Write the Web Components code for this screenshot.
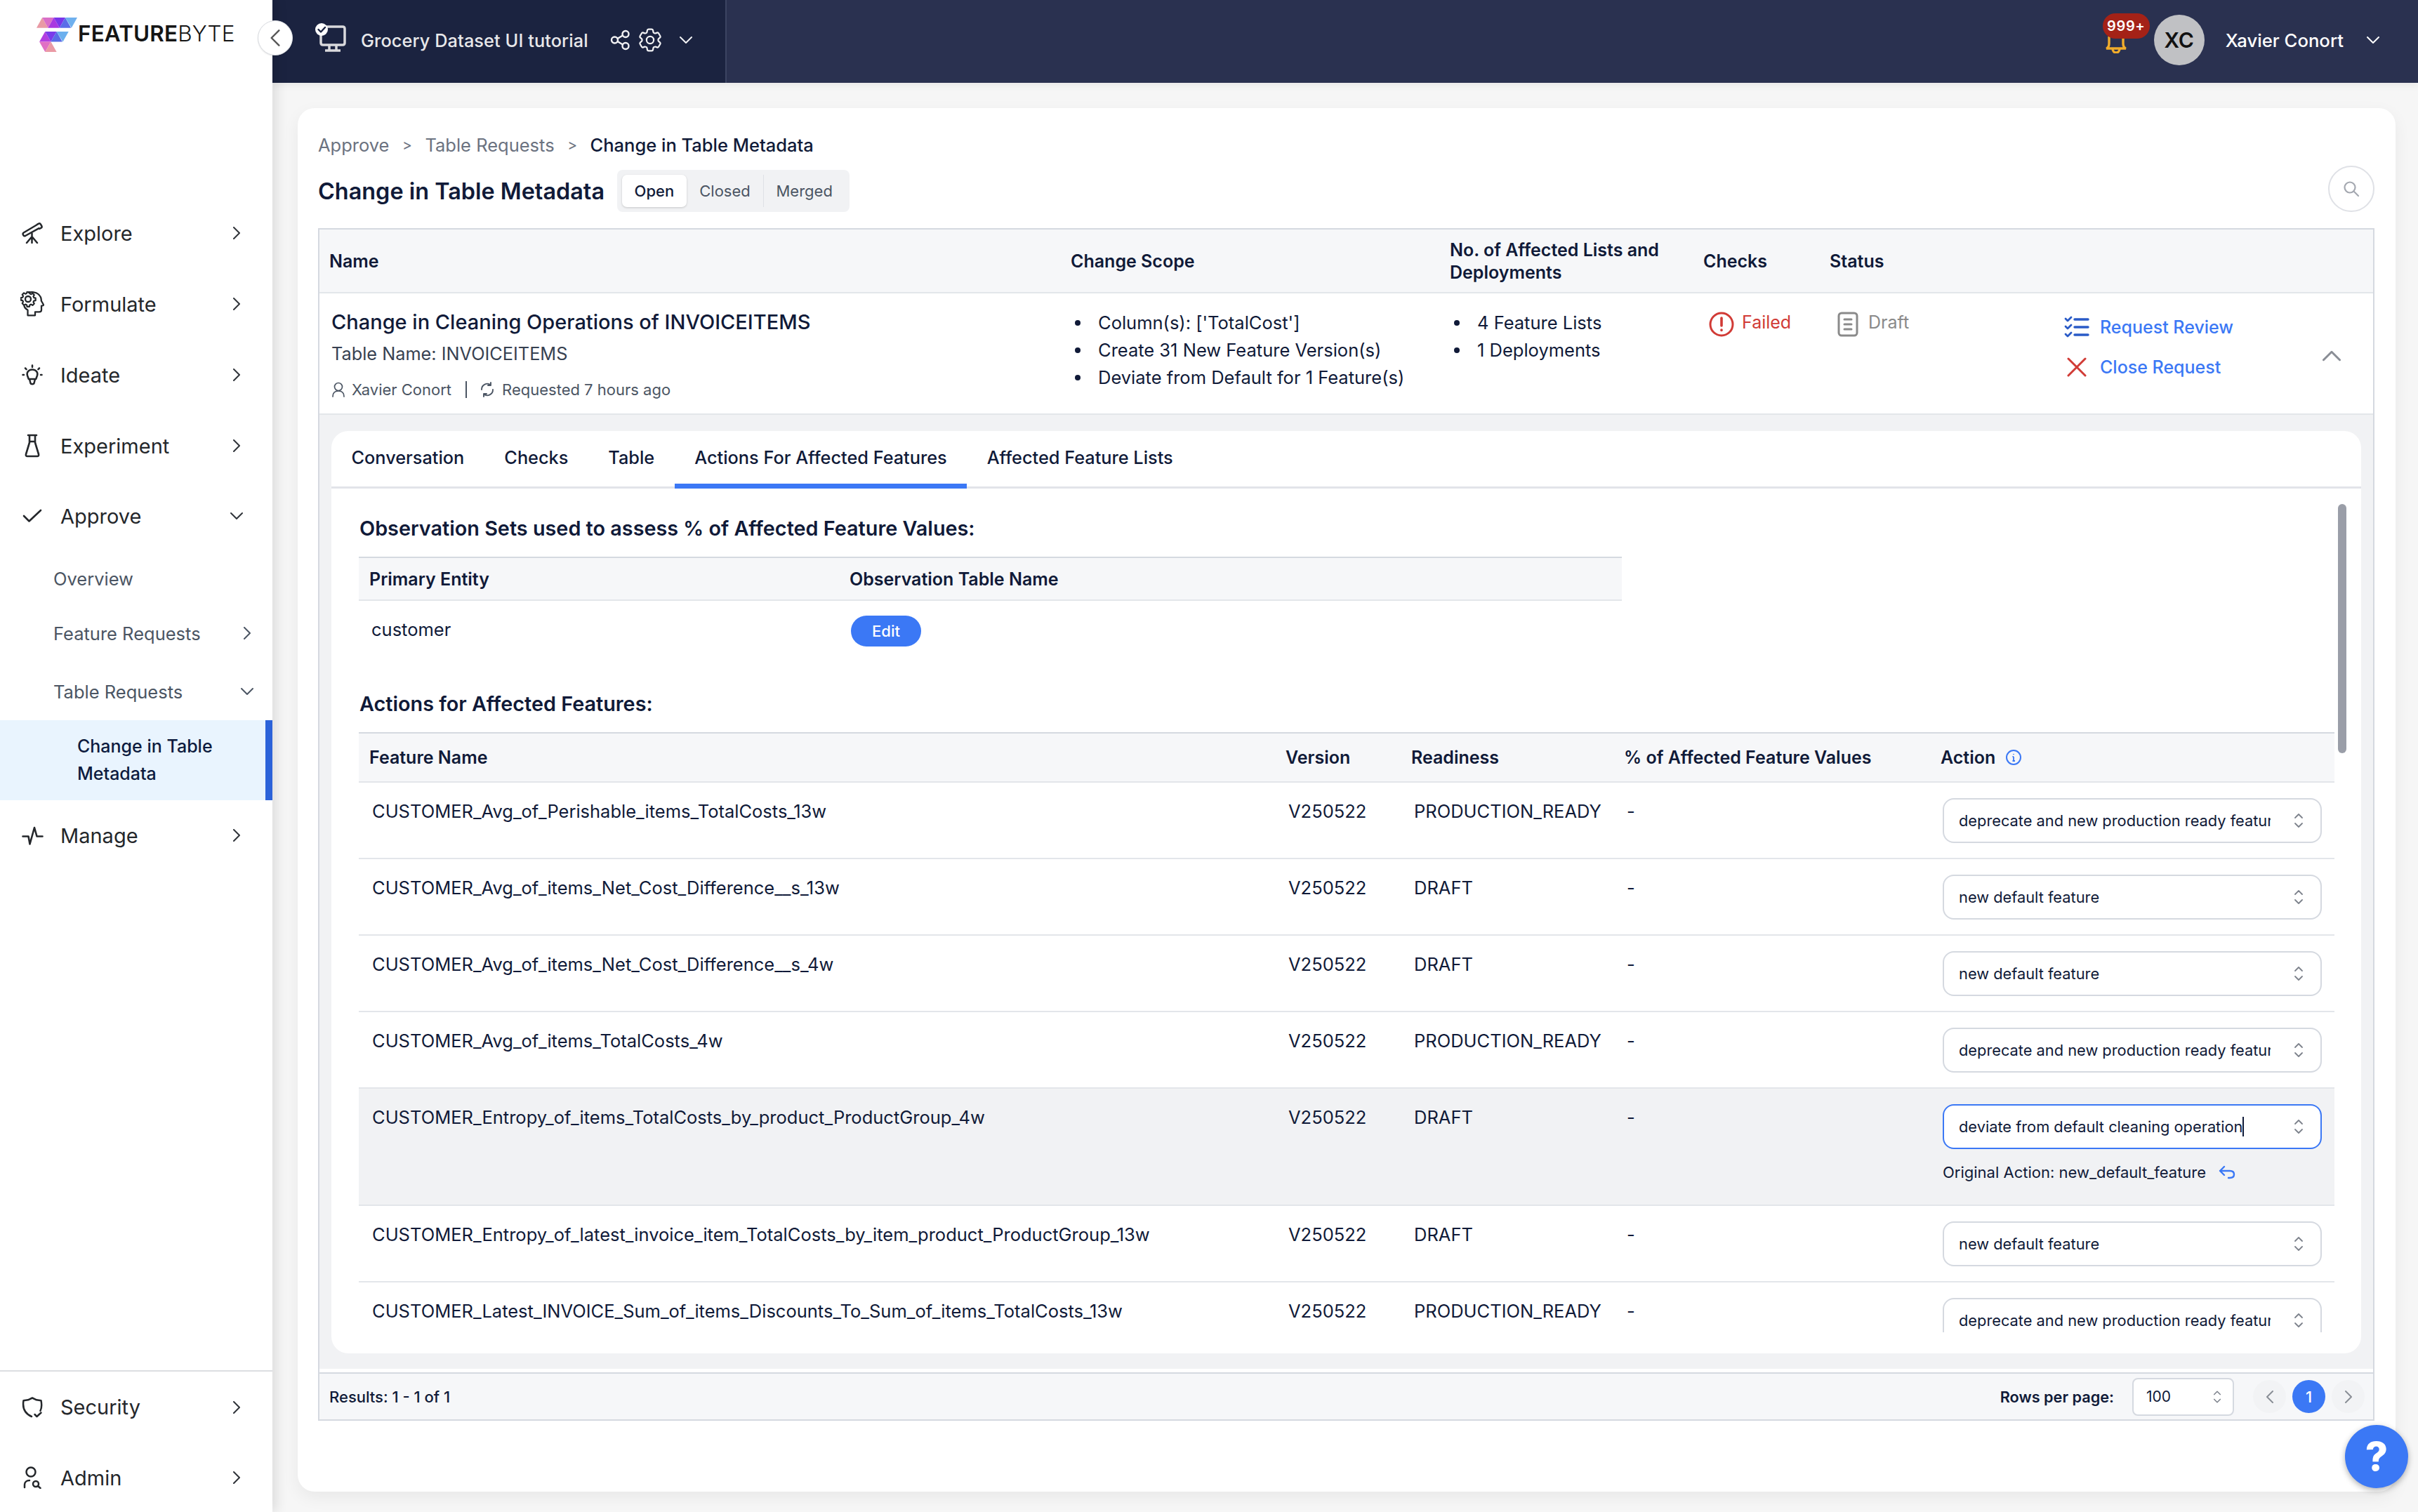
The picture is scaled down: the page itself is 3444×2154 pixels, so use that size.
<!DOCTYPE html>
<html lang="en">
<head>
<meta charset="utf-8">
<title>FeatureByte</title>
<style>
html,body{margin:0;padding:0;background:#f6f6f6;font-family:Inter,"Noto Sans",sans-serif;color:#101a38;-webkit-font-smoothing:antialiased}
body{width:3444px;height:2154px;overflow:hidden}
</style>
</head>
<body>
<fb-app>
  <fb-sidebar slot="side">
    <fb-nav icon="telescope" h="101" slot="top">Explore</fb-nav>
    <fb-nav icon="head" h="101" slot="top">Formulate</fb-nav>
    <fb-nav icon="bulb" h="101" slot="top">Ideate</fb-nav>
    <fb-nav icon="flask" h="101" slot="top">Experiment</fb-nav>
    <fb-nav icon="check" h="99" open slot="top">Approve</fb-nav>
    <fb-subnav h="79" slot="top" plain>Overview</fb-subnav>
    <fb-subnav h="77" slot="top">Feature Requests</fb-subnav>
    <fb-subnav h="85.500" pt="4" open slot="top">Table Requests</fb-subnav>
    <fb-subnav-active slot="top">Change in Table<br>Metadata</fb-subnav-active>
    <fb-nav icon="pulse" h="101" slot="top">Manage</fb-nav>
    <fb-nav icon="shield" h="101" slot="bottom">Security</fb-nav>
    <fb-nav icon="admin" h="100" slot="bottom">Admin</fb-nav>
  </fb-sidebar>
  <fb-topbar slot="top"></fb-topbar>
  <fb-page slot="main">
    <fb-breadcrumb slot="crumb"></fb-breadcrumb>
    <fb-title-row slot="title"></fb-title-row>
    <fb-request-table slot="table">
      <fb-tabs slot="tabs"></fb-tabs>
      <fb-panel slot="panel">
        <fb-observation></fb-observation>
        <fb-feature-table>
          <fb-feature-row name="CUSTOMER_Avg_of_Perishable_items_TotalCosts_13w" ready="PRODUCTION_READY" action="deprecate and new production ready feature"></fb-feature-row>
          <fb-feature-row name="CUSTOMER_Avg_of_items_Net_Cost_Difference__s_13w" ready="DRAFT" action="new default feature"></fb-feature-row>
          <fb-feature-row name="CUSTOMER_Avg_of_items_Net_Cost_Difference__s_4w" ready="DRAFT" action="new default feature"></fb-feature-row>
          <fb-feature-row name="CUSTOMER_Avg_of_items_TotalCosts_4w" ready="PRODUCTION_READY" action="deprecate and new production ready feature"></fb-feature-row>
          <fb-feature-row name="CUSTOMER_Entropy_of_items_TotalCosts_by_product_ProductGroup_4w" ready="DRAFT" action="deviate from default cleaning operation" focused original="new_default_feature"></fb-feature-row>
          <fb-feature-row name="CUSTOMER_Entropy_of_latest_invoice_item_TotalCosts_by_item_product_ProductGroup_13w" ready="DRAFT" action="new default feature"></fb-feature-row>
          <fb-feature-row name="CUSTOMER_Latest_INVOICE_Sum_of_items_Discounts_To_Sum_of_items_TotalCosts_13w" ready="PRODUCTION_READY" action="deprecate and new production ready feature"></fb-feature-row>
        </fb-feature-table>
      </fb-panel>
      <fb-table-footer slot="footer"></fb-table-footer>
    </fb-request-table>
  </fb-page>
  <fb-help slot="help"></fb-help>
</fb-app>
<script>
const S='fill="none" stroke="currentColor" stroke-linecap="round" stroke-linejoin="round"';
const ICON={
 telescope:`<svg width="30" height="30" viewBox="0 0 30 30" ${S} stroke-width="2.500"><path d="M2.600 14.500 21.500 3.200M5 19 24.600 8.200M2.600 14.500c-1.200.8-1.200 1.800-.7 2.900.6 1.300 1.700 2.200 3.100 1.600M21.800 2.900l2.300-1.300c1.200-.6 2.200-.2 2.900 1l1.300 2.300c.6 1.200.4 2.100-.7 2.800l-2.400 1.300"/><path d="M14.500 15.500V29M14.500 20 7 29M14.500 20 22 29"/></svg>`,
 head:`<svg width="34" height="36" viewBox="0 0 34 36" ${S} stroke-width="2.300"><path d="M12 1.800c4-1.300 10-.8 13.500 2.200 3.500 3 4.500 6.500 4.300 9.500l3 5.300c.5 1-.2 1.700-2.800 1.900v5.800c0 1.800-1.200 2.800-3 2.800H21v5H10.500v-7.500C7.500 25 6 23.500 5.500 21"/><circle cx="11" cy="11" r="4"/><path d="M9.200 1.800h3.600l.5 2.500 2 .9 2.200-1.400 2.500 2.500-1.400 2.200.9 2 2.500.5v3.600l-2.500.5-.9 2 1.400 2.200-2.500 2.500-2.200-1.400-2 .9-.5 2.500H9.200l-.5-2.500-2-.9-2.200 1.400L2 18.800l1.400-2.200-.9-2L0 14.100v-3.600l2.500-.5.9-2L2 5.800l2.500-2.500 2.200 1.400 2-.9z" transform="translate(.8 -.8) scale(.95)"/></svg>`,
 bulb:`<svg width="30" height="30" viewBox="0 0 30 30" ${S} stroke-width="2.500"><path d="M15 1.500v2.500M5 5.500l1.600 1.600M25 5.500l-1.600 1.600M1.500 15h1.500M27 15h1.500"/><path d="M9.800 21 8 16c-1.500-4.500 2-8.500 7-8.500s8.500 4 7 8.500l-1.800 5zM11 21l1.500 6c.5 1.500 4.500 1.500 5 0l1.500-6"/></svg>`,
 flask:`<svg width="22" height="34" viewBox="0 0 22 34" ${S} stroke-width="2.600"><path d="M5 2h12M7 2v10.500L2 29c-.5 1.800.3 3 2 3h14c1.700 0 2.500-1.200 2-3l-5-16.500V2M7 11h8"/></svg>`,
 check:`<svg width="28" height="20" viewBox="0 0 28 20" ${S} stroke-width="2.600"><path d="M2 10l7.500 7.500L26 2"/></svg>`,
 pulse:`<svg width="31" height="27" viewBox="0 0 31 27" ${S} stroke-width="2.600"><path d="M1.500 14.500H9.500L11.500 25.500 18 2 21.500 14.500H29.500"/></svg>`,
 shield:`<svg width="30" height="30" viewBox="0 0 30 30" ${S} stroke-width="2.500"><path d="M15 1.500 21 4.300l6.500 1c1 5 1 10.500-1 14.500M15 1.500 9 4.300l-6.500 1C1 14 3 23 14 28"/><path d="M18.500 25l3 3 6-5.500"/></svg>`,
 admin:`<svg width="30" height="32" viewBox="0 0 30 32" ${S} stroke-width="2.500"><circle cx="13" cy="8" r="6.500"/><path d="M4 30v-4c0-3.500 3-6 7-6"/><circle cx="20" cy="25" r="4"/><path d="M23 28l3.500 3"/></svg>`
};
const chev=(d,sz=16,sw=2)=>{const p={r:'M5 1l8 8-8 8',l:'M13 1 5 9l8 8',d:'M1 5l8 8 8-8',u:'M1 13l8-8 8 8'}[d];return `<svg width="${sz}" height="${sz}" viewBox="0 0 18 18" ${S} stroke-width="${sw*18/sz}"><path d="${p}"/></svg>`};
const updown=(w=14,h=22)=>`<svg width="${w}" height="${h}" viewBox="0 0 14 22" ${S} stroke-width="1.800"><path d="M2 7l5-5 5 5M2 15l5 5 5-5"/></svg>`;
function def(name,css,html){customElements.define(name,class extends HTMLElement{constructor(){super();this.attachShadow({mode:'open'})}
 connectedCallback(){this.shadowRoot.innerHTML=`<style>${css}</style>`+(typeof html==='function'?html(this):html)}})}

def('fb-app',`:host{display:grid;grid-template-columns:388px 1fr;grid-template-rows:118px 1fr;width:3444px;height:2154px;position:relative}
 .s{grid-row:1/3;z-index:2;display:block;height:2154px}.t{grid-column:2}.m{grid-column:2;min-height:0}`,
 `<div class="s"><slot name="side"></slot></div><div class="t"><slot name="top"></slot></div><div class="m"><slot name="main"></slot></div><slot name="help"></slot>`);

def('fb-sidebar',`:host{display:flex;flex-direction:column;height:2154px;background:#fff;box-shadow:6px 0 16px rgba(0,0,0,.10);position:relative}
 .logo{height:281.500px;box-sizing:border-box;padding:25px 0 0 52px;display:flex;align-items:flex-start;flex:none}
 .word{font-size:31.400px;line-height:46px;color:#151515;font-weight:600;margin-left:1px;letter-spacing:.2px}
 .word span{font-weight:300}
 .sp{flex:1}.bt{border-top:2px solid #dcdee2;height:200px}
 .col{position:absolute;left:367px;top:29px;width:48px;height:48px;border:1px solid #d8dbe0;border-radius:50%;background:#fff;display:flex;align-items:center;justify-content:center;color:#555;box-shadow:0 1px 2px rgba(0,0,0,.1);z-index:3}`,
 `<div class="logo"><svg width="58" height="49" viewBox="38 45 170 143" shape-rendering="geometricPrecision">
   <path fill="#e99aa5" d="M38 88 62 45 86 88z"/><path fill="#d96ec8" d="M62 45h48L86 88z"/><path fill="#a937e0" d="M86 88l24-43 24 43z"/><path fill="#7a35ea" d="M110 45h48l-24 43z"/><path fill="#5b6de8" d="M134 88l24-43 24 43z"/><path fill="#6fb0ee" d="M158 45h50l-24 43z"/>
   <path fill="#b23fe0" d="M50 146l24-43 24 43z"/><path fill="#7a3cea" d="M74 103h48l-24 43z"/><path fill="#5a6de6" d="M98 146l24-43 24 43z"/><path fill="#6cb0ee" d="M122 103h50l-24 43z"/>
   <path fill="#e070c4" d="M50 146h48l-24 42z"/><path fill="#ea9aa5" d="M74 188l24-42 24 42z"/></svg>
   <div class="word">FEATURE<span>BYTE</span></div></div>
  <slot name="top"></slot><div class="sp"></div><div class="bt"><slot name="bottom"></slot></div>
  <div class="col">${chev('l',24,2.4)}</div>`);

def('fb-nav',`:host{display:flex;align-items:center;box-sizing:border-box;font-size:29px;color:#24272b;padding-right:42px;position:relative}
 .i{width:86px;box-sizing:border-box;display:flex;justify-content:center;padding-left:6px;flex:none}
 .t{flex:1}.c{display:flex;color:#30343a}`,
 h=>{h.style.height=h.getAttribute('h')+'px';return `<div class="i">${ICON[h.getAttribute('icon')]}</div><div class="t"><slot></slot></div><div class="c">${chev(h.hasAttribute('open')?'d':'r',18,2)}</div>`});

def('fb-subnav',`:host{display:flex;align-items:center;box-sizing:border-box;font-size:25.500px;color:#4b5563;padding-left:76px;padding-right:27px}
 .t{flex:1}.c{display:flex;color:#4b5563}`,
 h=>{h.style.height=h.getAttribute('h')+'px';if(h.getAttribute('pt'))h.style.paddingTop=h.getAttribute('pt')+'px';
  return `<div class="t"><slot></slot></div>${h.hasAttribute('plain')?'':`<div class="c">${chev(h.hasAttribute('open')?'d':'r',18,2)}</div>`}`});

def('fb-subnav-active',`:host{display:block;box-sizing:border-box;height:113.500px;background:#e9f4fe;border-right:10px solid #2b62d9;padding:18px 0 0 110px;font-size:25px;line-height:39px;color:#0d1b3e;font-weight:500}`,`<slot></slot>`);

def('fb-topbar',`:host{display:flex;height:118px;background:#2a3150;color:#fff;box-shadow:0 4px 10px rgba(0,0,0,.06);position:relative}
 .l{width:647px;box-sizing:border-box;background:#1b2340;border-right:2px solid #3c4462;display:flex;align-items:center;padding:0 0 4px 60px;flex:none;color:#e8e8ea}
 .mon{width:50px;height:56px;flex:none;margin-top:6px}
 .name{font-size:25.300px;font-weight:500;margin-left:16px;white-space:nowrap;letter-spacing:.1px}
 .ic{display:flex;align-items:center;margin-left:31px;gap:11px;color:#f2f2f4}
 .r{flex:1;display:flex;align-items:center;justify-content:flex-end;padding:0 55px 4px 0}
 .bell{position:relative;width:70px;height:72px;margin-right:3px}
 .bell svg{position:absolute;left:3px;top:31px}
 .badge{position:absolute;left:0;top:-2px;width:67px;height:36px;border-radius:18px;background:#a42217;color:#fff;font-size:20px;font-weight:600;line-height:36px;text-align:center;letter-spacing:.6px}
 .av{width:72px;height:72px;border-radius:50%;background:#c0c1c4;color:#111;font-size:30px;font-weight:600;display:flex;align-items:center;justify-content:center;margin-right:30px}
 .u{font-size:25.700px;font-weight:500;margin-right:33px;white-space:nowrap}`,
 `<div class="l"><svg class="mon" viewBox="0 0 50 56" fill="none">
    <path d="M16 6h24c2 0 3 1 3 3v20c0 2-1 3-3 3H12c-2 0-3-1-3-3V18" stroke="#d9d9dc" stroke-width="3.500" stroke-linecap="round"/>
    <path d="M21 32v7M31 32v7M15 40h22" stroke="#d9d9dc" stroke-width="3.500"/>
    <circle cx="10" cy="10" r="9" fill="#fff"/><path d="M5.500 10l3.500 3.500 6-6.500" stroke="#1b2340" stroke-width="2.400" stroke-linecap="round" stroke-linejoin="round"/></svg>
   <div class="name">Grocery Dataset UI tutorial</div>
   <div class="ic"><svg width="29" height="30" viewBox="0 0 29 30" ${S} stroke-width="2.400"><circle cx="6.500" cy="15" r="4.500"/><circle cx="22" cy="6.500" r="4.500"/><circle cx="22" cy="23.500" r="4.500"/><path d="M10.500 13 18 8.500M10.500 17l7.500 4.500"/></svg>
    <svg width="34" height="36" viewBox="2 2 20 20" ${S} stroke-width="1.300"><path d="M9.594 3.940c.09-.542.56-.94 1.110-.94h2.593c.55 0 1.020.398 1.110.94l.213 1.281c.063.374.313.686.645.870.074.04.147.083.22.127.325.196.72.257 1.075.124l1.217-.456a1.125 1.125 0 0 1 1.370.49l1.296 2.247a1.125 1.125 0 0 1-.26 1.431l-1.003.827c-.293.241-.438.613-.43.992a7.723 7.723 0 0 1 0 .255c-.008.378.137.75.43.991l1.004.827c.424.35.534.955.26 1.430l-1.298 2.247a1.125 1.125 0 0 1-1.369.491l-1.217-.456c-.355-.133-.75-.072-1.076.124a6.470 6.470 0 0 1-.22.128c-.331.183-.581.495-.644.869l-.213 1.281c-.09.543-.56.94-1.110.94h-2.594c-.55 0-1.019-.398-1.110-.94l-.213-1.281c-.062-.374-.312-.686-.644-.87a6.520 6.520 0 0 1-.22-.127c-.325-.196-.72-.257-1.076-.124l-1.217.456a1.125 1.125 0 0 1-1.369-.49l-1.297-2.247a1.125 1.125 0 0 1 .26-1.431l1.004-.827c.292-.24.437-.613.43-.991a6.932 6.932 0 0 1 0-.255c.007-.38-.138-.751-.43-.992l-1.004-.827a1.125 1.125 0 0 1-.26-1.430l1.297-2.247a1.125 1.125 0 0 1 1.370-.491l1.216.456c.356.133.751.072 1.076-.124.072-.044.146-.086.22-.128.332-.183.582-.495.644-.869l.214-1.280Z"/><circle cx="12" cy="12" r="3"/></svg>
    <span style="display:flex;margin-left:14px">${chev('d',18,2)}</span></div></div>
  <div class="r"><div class="bell"><svg width="32" height="24" viewBox="0 0 32 24" fill="none" stroke="#f0ac2b" stroke-width="3.400" stroke-linecap="round"><path d="M6 0v10c0 4-1 6-4 7h28c-3-1-4-3-4-7V0M11 17c0 8 10 8 10 0"/></svg><div class="badge">999+</div></div>
   <div class="av">XC</div><div class="u">Xavier Conort</div><span style="display:flex">${chev('d',18,2)}</span></div>`);

def('fb-page',`:host{display:block;box-sizing:border-box;padding:36px 32px 0 36px;height:2036px}
 .card{background:#fff;border-radius:24px;height:1971px;box-sizing:border-box;padding:26px 30px 0 29px;box-shadow:0 8px 24px rgba(0,0,0,.06);display:flex;flex-direction:column}`,
 `<div class="card"><slot name="crumb"></slot><slot name="title"></slot><slot name="table"></slot></div>`);

def('fb-breadcrumb',`:host{display:flex;align-items:center;height:52px;font-size:25.500px;color:#6b7280;white-space:nowrap;margin-bottom:10px}
 .s{margin:0 18.500px;font-size:21px;color:#6b7280}b{font-weight:500;color:#101a38}`,
 `<span>Approve</span><span class="s">&gt;</span><span>Table Requests</span><span class="s">&gt;</span><b>Change in Table Metadata</b>`);

def('fb-title-row',`:host{display:flex;align-items:center;height:60px;margin-bottom:23px;color:#101a38}
 h1{margin:0;font-size:32.400px;font-weight:600;white-space:nowrap;width:426px;flex:none}
 .seg{display:flex;width:331px;height:60px;box-sizing:border-box;background:#f1f2f4;border-radius:8px;padding:7px;font-size:22px;color:#4b5563;align-items:stretch}
 .seg span{display:flex;align-items:center;justify-content:center}
 .on{width:92px;background:#fff;border-radius:7px;box-shadow:0 1px 3px rgba(0,0,0,.18);color:#101a38;font-weight:500}
 .b{width:110px;border-right:1px solid #dfe1e6}.c{width:115px}
 .sr{margin-left:auto;width:66px;height:66px;box-sizing:border-box;border:2px solid #dfe1e6;border-radius:50%;display:flex;align-items:center;justify-content:center;color:#a4a8b0;margin-top:-6px}`,
 `<h1>Change in Table Metadata</h1><div class="seg"><span class="on">Open</span><span class="b">Closed</span><span class="c">Merged</span></div>
  <div class="sr"><svg width="24" height="24" viewBox="0 0 24 24" ${S} stroke-width="2.200"><circle cx="10" cy="10" r="7.500"/><path d="M16 16l6 6"/></svg></div>`);

def('fb-request-table',`:host{display:block;box-sizing:border-box;border:2px solid #d5d9e0;height:1699px;width:2929px}
 .g{display:grid;grid-template-columns:1056px 540px 361px 180px 350px 1fr}
 .h{background:#f6f7f9;height:91px;box-sizing:border-box;border-bottom:2px solid #e3e6ea;font-size:25px;font-weight:600;color:#101a38;align-items:center;line-height:32px}
 .h>div{padding-left:14px}
 .r{height:173px;box-sizing:border-box;font-size:25.500px;color:#101a38;border-bottom:2px solid #e3e6ea}
 .n{padding:0 0 0 17px;position:relative}
 .title{font-size:29px;font-weight:500;line-height:40px;margin-top:21px;white-space:nowrap}
 .tn{font-size:25.300px;line-height:36px;color:#374151;margin-top:7px}
 .m{display:flex;align-items:center;font-size:22px;color:#4b5563;margin-top:18px;height:30px;white-space:nowrap}
 .m svg{flex:none}.bar{width:2px;height:24px;background:#4b5563;margin:0 18px 0 20px}
 ul{list-style:none;margin:22px 0 0;padding:0 0 0 20px;line-height:39px}
 li{display:flex;align-items:center;white-space:nowrap}
 li::before{content:"";width:8px;height:8px;border-radius:50%;background:#101a38;margin-right:25px;flex:none}
 .f{display:flex;align-items:flex-start;padding:26px 0 0 22px}
 .fl{font-size:25px;line-height:30px;margin-left:11px}
 .act{display:flex;position:relative;margin-left:-2px}
 .a{display:flex;align-items:center;color:#3b78f5;font-size:25px;font-weight:500;height:57px;white-space:nowrap}
 .a .ai{width:51px;flex:none;display:flex}
 .up{position:absolute;left:368px;top:76px;color:#8a8e96;display:flex}
 .p{background:#f1f2f4;height:1359px;box-sizing:border-box;padding:23px 17px 22px 17px}
 .w{background:#fff;border-radius:24px;height:1314px;box-sizing:border-box;display:flex;flex-direction:column;position:relative}
 .gap{height:5px;background:#fff}
 .fo{border-top:2px solid #d5d9e0;height:67px;box-sizing:border-box;background:#f6f7f9}`,
 `<div class="g h"><div>Name</div><div>Change Scope</div><div>No. of Affected Lists and Deployments</div><div>Checks</div><div>Status</div><div></div></div>
  <div class="g r">
   <div class="n"><div class="title">Change in Cleaning Operations of INVOICEITEMS</div><div class="tn">Table Name: INVOICEITEMS</div>
    <div class="m"><svg width="20" height="22" viewBox="0 0 20 22" ${S} stroke-width="1.700" style="margin-right:9px"><circle cx="10" cy="7" r="5.500"/><path d="M2 21c0-5 3-8 8-8s8 3 8 8"/></svg>Xavier Conort<div class="bar"></div><svg width="22" height="22" viewBox="0 0 22 22" ${S} stroke-width="1.900" style="margin-right:10px"><path d="M3 11A8 8 0 0 1 16 4.500M19 11a8 8 0 0 1-13 6.500M16 1v4h-4M6 21v-4h4"/></svg>Requested 7 hours ago</div></div>
   <div><ul><li>Column(s): ['TotalCost']</li><li>Create 31 New Feature Version(s)</li><li>Deviate from Default for 1 Feature(s)</li></ul></div>
   <div><ul><li>4 Feature Lists</li><li>1 Deployments</li></ul></div>
   <div class="f" style="color:#d13b36"><svg width="36" height="36" viewBox="0 0 36 36" fill="none" stroke="currentColor" stroke-width="3" stroke-linecap="round" style="flex:none"><circle cx="18" cy="18" r="16"/><path d="M18 9v11M18 26v.5" stroke-width="3.600"/></svg><span class="fl">Failed</span></div>
   <div class="f" style="color:#8a8a8a;padding-left:25px"><svg width="30" height="36" viewBox="0 0 30 36" fill="none" stroke="currentColor" stroke-width="3" stroke-linecap="round" style="flex:none"><rect x="2" y="2" width="26" height="32" rx="4"/><path d="M10 11h10M10 18h10M10 25h10"/></svg><span class="fl" style="margin-left:14px">Draft</span></div>
   <div class="act"><div style="margin-top:19px">
     <div class="a"><span class="ai"><svg width="36" height="32" viewBox="0 0 36 32" fill="none" stroke="#2a5bc7" stroke-linecap="round" stroke-linejoin="round"><path d="M15 5h19M15 16h19M15 27h19" stroke-width="3.400"/><path d="M2 4l3 3 5-5M2 15l3 3 5-5M2 26l3 3 5-5" stroke-width="2.800"/></svg></span>Request Review</div>
     <div class="a"><span class="ai"><svg width="28" height="28" viewBox="0 0 28 28" fill="none" stroke="#d13b36" stroke-width="3" stroke-linecap="round" style="margin-left:4px"><path d="M2 2l24 24M26 2 2 26"/></svg></span>Close Request</div></div>
    <div class="up">${chev('u',26,3)}</div></div>
  </div>
  <div class="p"><div class="w"><slot name="tabs"></slot><slot name="panel"></slot></div></div>
  <div class="gap"></div>
  <div class="fo"><slot name="footer"></slot></div>`);

def('fb-tabs',`:host{display:flex;height:82px;box-sizing:border-box;border-bottom:3px solid #e2e4e9;font-size:25.300px;font-weight:500;color:#101a38;flex:none}
 span{display:block;padding:22px 28.500px 0;box-sizing:content-box;height:53px;white-space:nowrap}
 span:first-child{padding-left:29px}
 .on{border-bottom:7px solid #3b78f5}`,
 `<span>Conversation</span><span>Checks</span><span>Table</span><span class="on">Actions For Affected Features</span><span>Affected Feature Lists</span>`);

def('fb-panel',`:host{display:block;height:1202px;overflow:hidden;position:relative;padding-left:39px;padding-right:38px;flex:none}
 .bar{position:absolute;right:21px;top:22px;width:12px;height:355px;border-radius:6px;background:#9a9ea8}`,
 `<slot></slot><div class="bar"></div>`);

def('fb-observation',`:host{display:block;padding-top:37px;color:#101a38}
 h3{margin:0 0 20px 1px;font-size:28.800px;line-height:40px;font-weight:600;white-space:nowrap}
 .g{display:grid;grid-template-columns:684px 1fr;width:1799px}
 .h{height:63px;box-sizing:border-box;background:#f6f7f9;border-top:2px solid #d5d9e0;border-bottom:2px solid #e3e6ea;align-items:center;font-size:25px;font-weight:600}
 .h>div{padding-left:15px}
 .r{height:104px;font-size:25.500px}
 .c{padding:24px 0 0 18px;line-height:34px}
 .e{padding:21px 0 0 17px}
 button{all:unset;display:flex;width:100px;height:44px;border-radius:22px;background:#3b78f5;color:#fff;font-size:22px;font-weight:500;align-items:center;justify-content:center}`,
 `<h3>Observation Sets used to assess % of Affected Feature Values:</h3>
  <div class="g h"><div>Primary Entity</div><div>Observation Table Name</div></div>
  <div class="g r"><div class="c">customer</div><div class="e"><button>Edit</button></div></div>`);

const COLS='grid-template-columns:1305px 179px 303px 451px 575px';
def('fb-feature-table',`:host{display:block;color:#101a38}
 h3{margin:23px 0 20px 1px;font-size:28.800px;line-height:40px;font-weight:600;white-space:nowrap}
 .g{display:grid;${COLS};height:72px;box-sizing:border-box;background:#f6f7f9;border-top:2px solid #d5d9e0;border-bottom:2px solid #e3e6ea;align-items:center;font-size:25px;font-weight:600}
 .g>div{padding-left:15px}.in{display:inline-flex;margin-left:14px;vertical-align:-3px}`,
 `<h3>Actions for Affected Features:</h3>
  <div class="g"><div>Feature Name</div><div>Version</div><div>Readiness</div><div>% of Affected Feature Values</div><div>Action<span class="in"><svg width="24" height="24" viewBox="0 0 24 24" fill="none" stroke="#3b78f5" stroke-width="2"><circle cx="12" cy="12" r="10"/><path d="M12 11v6M12 7v1M10.500 11H12M10.500 17h3.500" stroke-width="1.800"/></svg></span></div></div>
  <slot></slot>`);

def('fb-feature-row',`:host{display:grid;${COLS};height:109px;box-sizing:border-box;border-bottom:2px solid #e3e6ea;font-size:25.500px;line-height:36px;color:#101a38}
 :host([focused]){height:167px;background:#f1f2f4}
 .c{padding:23px 0 0 19px;white-space:nowrap}
 .s{padding:22px 0 0 18px}
 .o{display:flex;align-items:center;font-size:22px;height:36px;margin-top:15px;white-space:nowrap}
 .o svg{margin-left:18px}`,
 h=>`<div class="c">${h.getAttribute('name')}</div><div class="c">V250522</div><div class="c">${h.getAttribute('ready')}</div><div class="c">-</div>
  <div class="s"><fb-select value="${h.getAttribute('action')}" ${h.hasAttribute('focused')?'focused':''}></fb-select>
  ${h.getAttribute('original')?`<div class="o">Original Action: ${h.getAttribute('original')}<svg width="24" height="20" viewBox="0 0 24 20" fill="none" stroke="#3b78f5" stroke-width="2.400" stroke-linecap="round" stroke-linejoin="round"><path d="M8 2 2 8l6 6M2 8h14c5 0 6 3 6 5s-1 5-6 5h-2"/></svg></div>`:''}</div>`);

def('fb-select',`:host{display:flex;align-items:center;width:540px;height:64px;box-sizing:border-box;background:#fff;border:2px solid #d5d9e0;border-radius:16px;padding:0 24px 0 21px;font-size:21.800px;color:#101a38}
 :host([focused]){border-color:#3b78f5}
 .t{width:444px;overflow:hidden;white-space:nowrap;flex:none;line-height:30px;display:flex;align-items:center}
 .cur{width:2px;height:28px;background:#101a38;flex:none}
 .u{margin-left:auto;display:flex;color:#7d828c}`,
 h=>`<div class="t">${h.getAttribute('value')}${h.hasAttribute('focused')?'<span class="cur"></span>':''}</div><div class="u">${updown()}</div>`);

def('fb-table-footer',`:host{display:flex;align-items:center;height:65px;font-size:22px;font-weight:500;color:#101a38;padding:0 12px 0 14px}
 .rp{margin-left:auto;font-weight:600;white-space:nowrap;font-size:21.700px}
 .sel{width:145px;height:54px;box-sizing:border-box;border:2px solid #d5d9e0;border-radius:8px;background:#fff;display:flex;align-items:center;padding:0 16px 0 18px;margin-left:26px;font-weight:400;font-size:21px}
 .sel span{margin-left:auto;display:flex;color:#7d828c}
 .pg{display:flex;gap:9px;margin-left:27px}
 .pg span{width:47px;height:47px;border-radius:50%;display:flex;align-items:center;justify-content:center;background:#f2f3f5;color:#8a8e96}
 .pg .on{background:#3b78f5;color:#fff;font-weight:500}`,
 `<div>Results: 1 - 1 of 1</div><div class="rp">Rows per page:</div><div class="sel">100<span>${updown(12,20)}</span></div>
  <div class="pg"><span>${chev('l',18,2)}</span><span class="on">1</span><span>${chev('r',18,2)}</span></div>`);

def('fb-help',`:host{position:absolute;left:3340px;top:2030px;width:90px;height:90px;border-radius:50%;background:#3b78f5;color:#fff;font-size:56px;font-weight:800;display:flex;align-items:center;justify-content:center;box-shadow:0 3px 8px rgba(0,0,0,.3);z-index:5}`,`?`);
</script>
</body>
</html>
